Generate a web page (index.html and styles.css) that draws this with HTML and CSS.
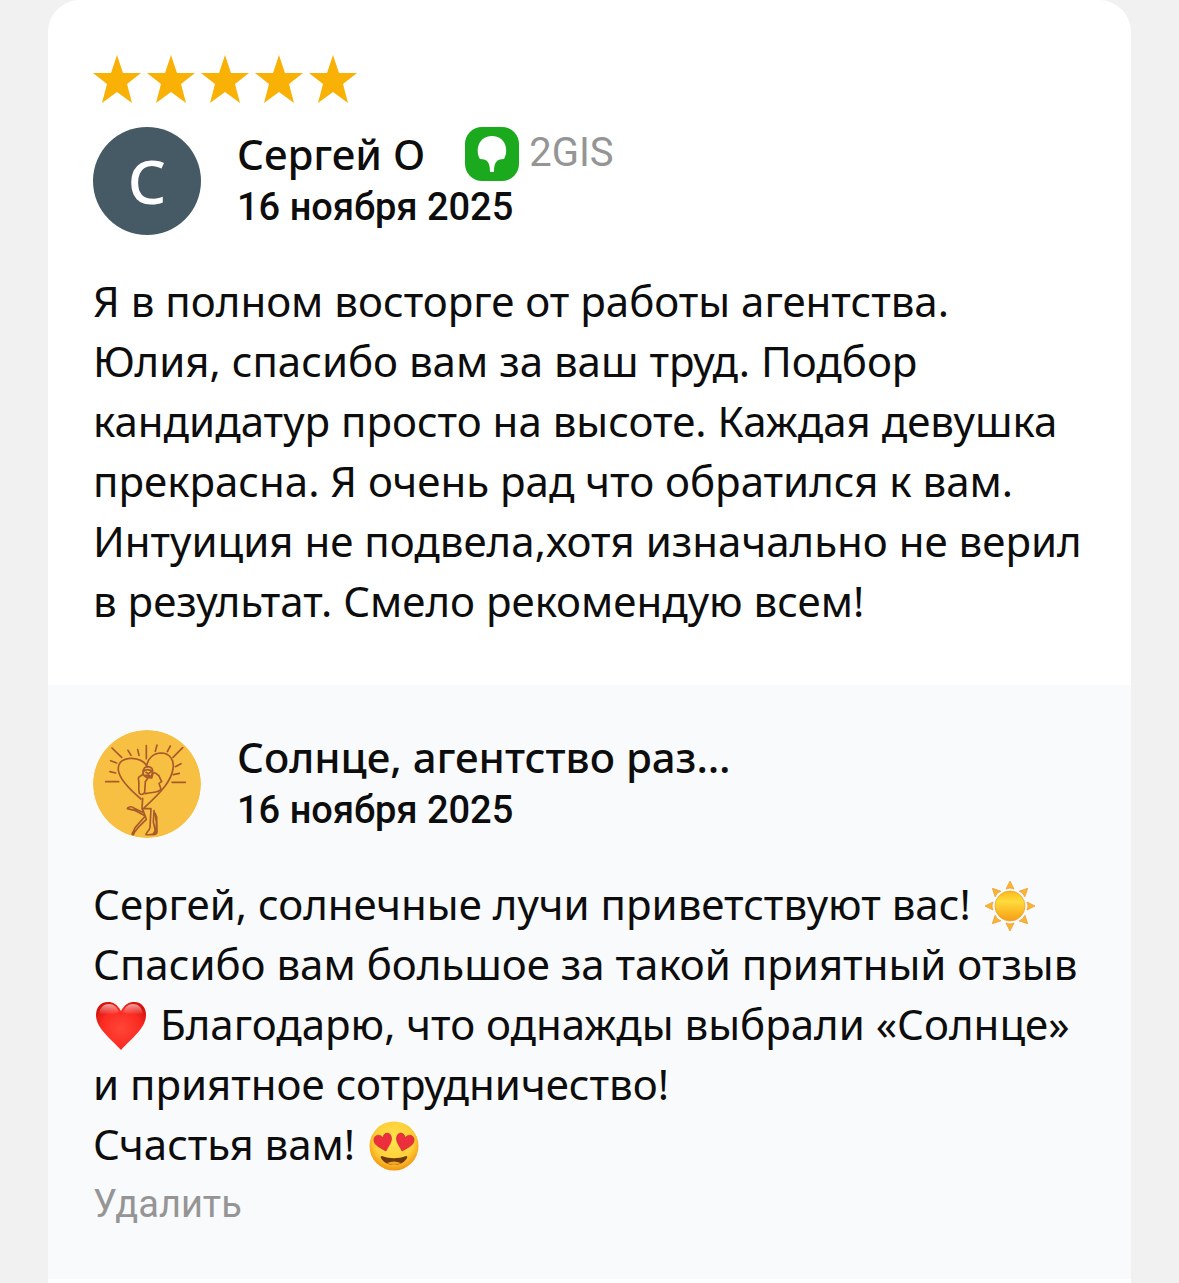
FILE: index.html
```html
<!DOCTYPE html>
<html lang="ru">
<head>
  <meta charset="UTF-8">
  <meta name="viewport" content="width=device-width, initial-scale=1">
  <title>Отзывы</title>
  <link rel="stylesheet" href="styles.css">
</head>
<body>

  <main class="card">

    <!-- Отзыв -->
    <article class="review">
      <div class="stars" role="img" aria-label="5 из 5">
        <svg class="star" viewBox="0 0 48 48"><path d="M24 0l6 18h18L34 29l5 19-15-11L9 48l5-19L0 18h18z"/></svg>
        <svg class="star" viewBox="0 0 48 48"><path d="M24 0l6 18h18L34 29l5 19-15-11L9 48l5-19L0 18h18z"/></svg>
        <svg class="star" viewBox="0 0 48 48"><path d="M24 0l6 18h18L34 29l5 19-15-11L9 48l5-19L0 18h18z"/></svg>
        <svg class="star" viewBox="0 0 48 48"><path d="M24 0l6 18h18L34 29l5 19-15-11L9 48l5-19L0 18h18z"/></svg>
        <svg class="star" viewBox="0 0 48 48"><path d="M24 0l6 18h18L34 29l5 19-15-11L9 48l5-19L0 18h18z"/></svg>
      </div>

      <header class="author">
        <div class="avatar letter">С</div>
        <div class="info">
          <div class="title">
            <h2 class="name">Сергей О</h2>
            <div class="source">
              <svg class="source-icon" viewBox="0 0 54 54" aria-hidden="true">
                <rect width="54" height="54" rx="17" fill="#1baa1e"/>
                <path fill="#fff" d="M15 32C10 24 13 9 27 9s17 15 12 23c-8 0-10 4-10 13h-4c0-9-2-13-10-13z"/>
              </svg>
              <span>2GIS</span>
            </div>
          </div>
          <time class="date" datetime="2025-11-16">16 ноября 2025</time>
        </div>
      </header>

      <p class="text">
        Я в полном восторге от работы агентства. Юлия, спасибо вам за ваш труд. Подбор кандидатур просто на высоте. Каждая девушка прекрасна. Я очень рад что обратился к вам. Интуиция не подвела,хотя изначально не верил в результат. Смело рекомендую всем!
      </p>
    </article>

    <!-- Ответ -->
    <article class="reply">
      <header class="author">
        <svg class="avatar" viewBox="0 0 324 324" aria-hidden="true">
          <circle cx="162" cy="162" r="162" fill="#f7c043"/>
          <g fill="none" stroke="#a85a2a" stroke-width="5" stroke-linecap="round" stroke-linejoin="round">
            <path d="M160 47v39M57 54l29 28M105 61l9 15M134 59l4 17M192 45l-5 19M232 48l-9 17M269 53l-29 29M53 92l18 7M51 125l17 4M38 155h39M264 101l-17 9M259 130l-18 4M237 157h40"/>
            <path d="M144 207C112 180 80 148 76 121c-3-24 16-37 41-36 25 2 39 9 46 26M161 108c3-23 20-38 43-39 28 0 40 23 36 48-6 38-36 69-86 116"/>
            <path d="M150 128c0-12 7-20 16-18 10 2 14 9 13 17-2 10-8 15-16 15-8-1-12-6-13-14zM152 124c8-7 17-6 26 1M159 127l7 4 8-5M158 136h11"/>
            <path d="M150 132c-6 10-15 4-14 15 5 15-2 26 3 43 6 7 12 2 16-2l2-33 9-13 10 2 4-14c8-6 13 6 17 6l9 19-8 5 6 18c-8 12-26 7-47 13"/>
            <path d="M149 205l-2 31h27l-3 57c-2 9-14 18-12 21 8 1 16 0 26-1l3-7-7-30 2-34"/>
            <path d="M148 236l4 12-30-14c-7-8-19-1-19 2l22 5 32 17-30 34-10 20c3 6 6-1 8-6l10-13 25-25-10-28"/>
            <path d="M183 247c9 18 9 42 4 55l-7 11c8 0 12-1 12-8l-1-44-5-12"/>
          </g>
        </svg>
        <div class="info">
          <h2 class="name">Солнце, агентство раз…</h2>
          <time class="date" datetime="2025-11-16">16 ноября 2025</time>
        </div>
      </header>

      <p class="text">
        Сергей, солнечные лучи приветствуют вас!
        <svg class="emoji" viewBox="0 0 52 52" role="img" aria-label="Солнце">
          <defs>
            <linearGradient id="sun" x1="0" y1="0" x2="0" y2="1">
              <stop offset="0" stop-color="#fbb91a"/>
              <stop offset=".35" stop-color="#ffdb3c"/>
              <stop offset="1" stop-color="#f89d12"/>
            </linearGradient>
          </defs>
          <g fill="#fbb725" stroke="#e8963a" stroke-width=".7">
            <path d="M26 1l4 8q-4-2-8 0z"/>
            <path d="M26 1l4 8q-4-2-8 0z" transform="rotate(45 26 26)"/>
            <path d="M26 1l4 8q-4-2-8 0z" transform="rotate(90 26 26)"/>
            <path d="M26 1l4 8q-4-2-8 0z" transform="rotate(135 26 26)"/>
            <path d="M26 1l4 8q-4-2-8 0z" transform="rotate(180 26 26)"/>
            <path d="M26 1l4 8q-4-2-8 0z" transform="rotate(225 26 26)"/>
            <path d="M26 1l4 8q-4-2-8 0z" transform="rotate(270 26 26)"/>
            <path d="M26 1l4 8q-4-2-8 0z" transform="rotate(315 26 26)"/>
          </g>
          <circle cx="26" cy="26" r="15" fill="url(#sun)" stroke="#ed9d25" stroke-width=".7"/>
        </svg>
        Спасибо вам большое за такой приятный отзыв
        <svg class="emoji" viewBox="0 0 52 52" role="img" aria-label="Сердце">
          <defs>
            <radialGradient id="heart" cx=".5" cy=".55" r=".6">
              <stop offset="0" stop-color="#ff4637"/>
              <stop offset=".65" stop-color="#fb2b22"/>
              <stop offset="1" stop-color="#d5120d"/>
            </radialGradient>
            <linearGradient id="shine" x1="0" y1="0" x2="0" y2="1">
              <stop offset="0" stop-color="#fff" stop-opacity=".6"/>
              <stop offset="1" stop-color="#fff" stop-opacity="0"/>
            </linearGradient>
          </defs>
          <path fill="url(#heart)" d="M26 11C22 4 18 2 13 2 5 2 1 8 1 15c0 13 14 23 25 35 11-12 25-22 25-35C51 8 47 2 39 2c-5 0-9 2-13 9z"/>
          <path fill="url(#shine)" d="M4 14C5 7 9 4 14 4c5 0 8 3 10 8-6 3-12 3-20 2zM28 12c2-5 5-8 10-8 5 0 9 3 10 10-8 1-14 1-20-2z"/>
        </svg>
        Благодарю, что однажды выбрали «Солнце» и приятное сотрудничество!<br>
        Счастья вам!
        <svg class="emoji" viewBox="0 0 52 52" role="img" aria-label="Влюблённые глаза">
          <defs>
            <radialGradient id="face" cx=".5" cy=".4" r=".6">
              <stop offset="0" stop-color="#ffe34e"/>
              <stop offset=".65" stop-color="#ffd03a"/>
              <stop offset="1" stop-color="#f2960f"/>
            </radialGradient>
          </defs>
          <circle cx="26" cy="26" r="24.500" fill="url(#face)"/>
          <path fill="#6f3a0b" d="M14 36c8 3 16 3 24 0 1 0 2 1 1 2-2 4-7 7-13 7s-11-3-13-7c-1-1 0-2 1-2z"/>
          <path fill="#f3a52b" d="M19 43q7-3 14 0-7 4-14 0z"/>
          <path fill="#eb2f3d" stroke="#c9222b" stroke-width=".6" d="M18 31C13 28 7 26 6 21c-1-6 6-8 9-3 0-5 6-7 8-2 2 5-2 9-5 15z"/>
          <path fill="#eb2f3d" stroke="#c9222b" stroke-width=".6" d="M34 31c5-3 11-5 12-10 1-6-6-8-9-3 0-5-6-7-8-2-2 5 2 9 5 15z"/>
        </svg>
      </p>
      <button class="delete" type="button">Удалить</button>
    </article>

  </main>

</body>
</html>
```
FILE: styles.css
```css
* {
  box-sizing: border-box;
}
body {
  margin: 0;
  padding: 0 48px;
  background: #f1f1f1;
  color: #0d0d0d;
  font-family: "Noto Sans", sans-serif;
}
.card {
  background: #fff;
  border-radius: 32px 32px 0 0;
  padding-bottom: 4px;
}
.review {
  padding: 55px 45px 54px;
}
.reply {
  padding: 45px;
  background: #f9fafc;
}
.stars {
  display: flex;
  gap: 6px;
  margin-bottom: 24px;
}
.star {
  width: 48px;
  height: 48px;
  fill: #f9b106;
}
.author {
  display: flex;
  gap: 36px;
  margin-bottom: 36px;
}
.avatar {
  flex: none;
  width: 108px;
  height: 108px;
  border-radius: 50%;
}
.letter {
  background: #465a65;
  color: #fff;
  font-size: 60px;
  font-weight: 500;
  line-height: 108px;
  text-align: center;
}
.title {
  display: flex;
  gap: 40px;
}
.name {
  margin: 0;
  font-size: 42px;
  font-weight: 500;
  line-height: 54px;
}
.source {
  display: flex;
  gap: 10px;
  color: #959595;
  font-family: Roboto, sans-serif;
  font-size: 40px;
  line-height: 52px;
}
.source-icon {
  width: 54px;
  height: 54px;
}
.date {
  display: block;
  font-family: Roboto, sans-serif;
  font-size: 38px;
  font-weight: 500;
  line-height: 52px;
}
.text {
  margin: 0;
  font-size: 42px;
  line-height: 60px;
}
.emoji {
  width: 52px;
  height: 52px;
  margin: 0 2px;
  vertical-align: -12px;
}
.delete {
  display: block;
  padding: 0;
  border: none;
  background: none;
  color: #959595;
  font-family: Roboto, sans-serif;
  font-size: 38px;
  line-height: 60px;
  cursor: pointer;
}
```
